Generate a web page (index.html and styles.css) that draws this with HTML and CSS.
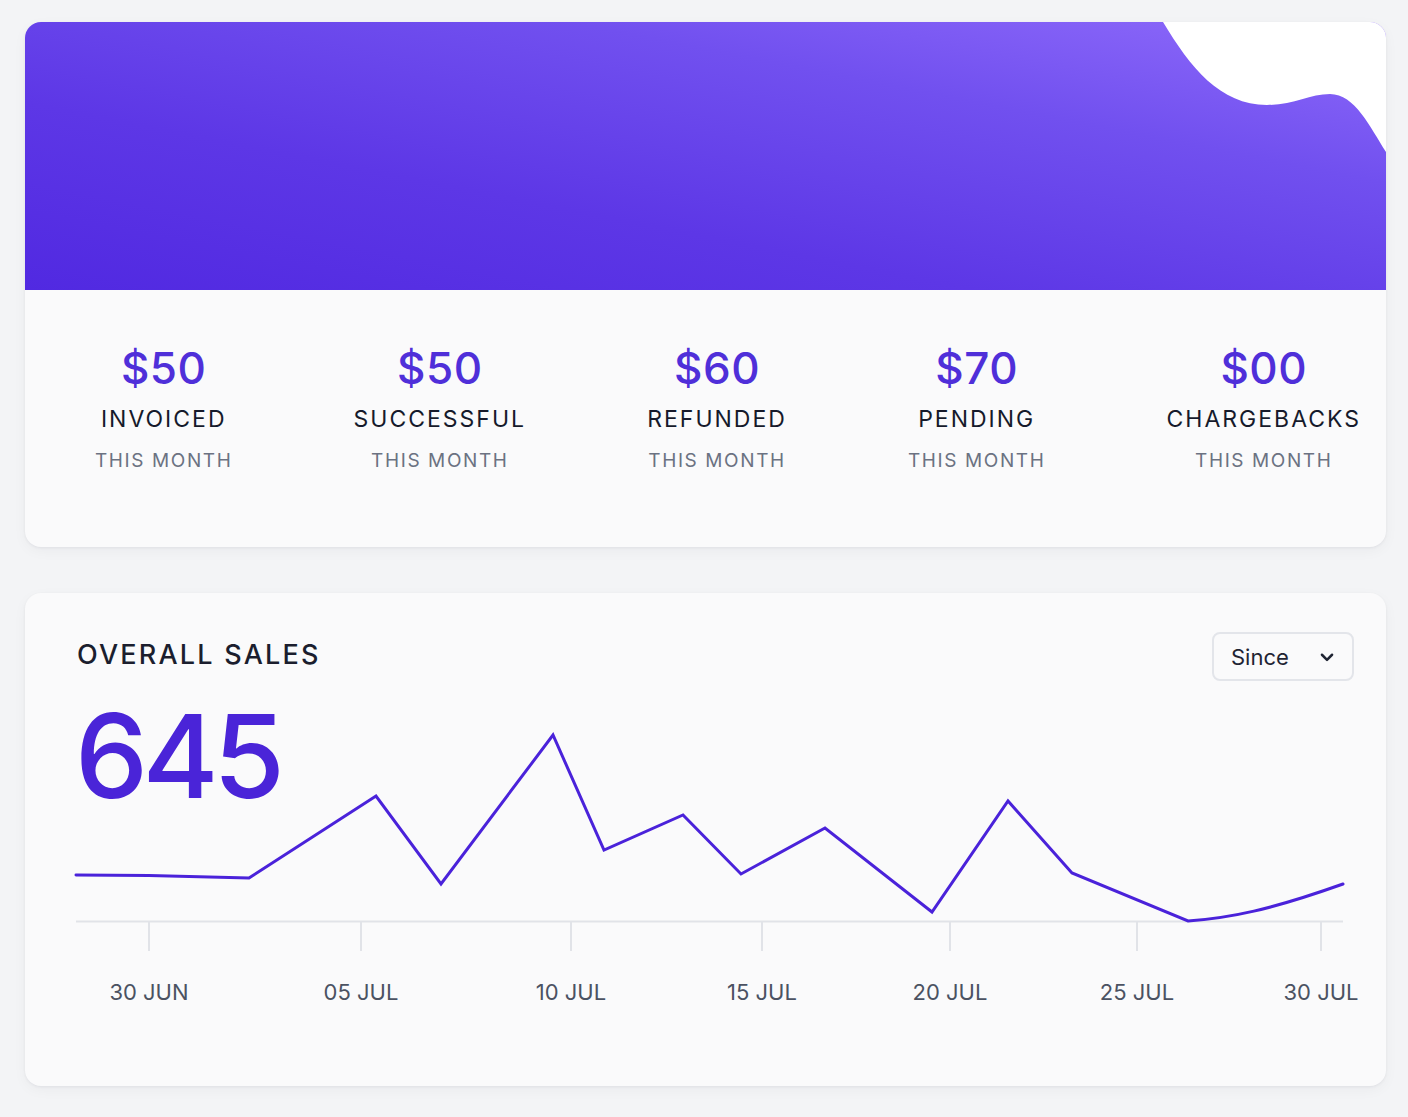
FILE: index.html
```html
<!DOCTYPE html>
<html lang="en">
<head>
<meta charset="utf-8">
<title>Dashboard</title>
<link rel="stylesheet" href="styles.css">
</head>
<body>
<main class="page">
  <section class="card summary">
    <div class="hero">
      <svg class="wave" viewBox="0 0 1361 268" preserveAspectRatio="none" aria-hidden="true">
        <path d="M1138,0 C1165,45 1195,83 1242,83 C1268,83 1285,72 1305,72 C1330,72 1345,105 1361,130 L1361,0 Z" fill="#ffffff"/>
      </svg>
    </div>
    <div class="stats">
      <div class="stat"><div class="value">$50</div><div class="label">INVOICED</div><div class="sub">THIS MONTH</div></div>
      <div class="stat"><div class="value">$50</div><div class="label">SUCCESSFUL</div><div class="sub">THIS MONTH</div></div>
      <div class="stat"><div class="value">$60</div><div class="label">REFUNDED</div><div class="sub">THIS MONTH</div></div>
      <div class="stat"><div class="value">$70</div><div class="label">PENDING</div><div class="sub">THIS MONTH</div></div>
      <div class="stat"><div class="value">$00</div><div class="label">CHARGEBACKS</div><div class="sub">THIS MONTH</div></div>
    </div>
  </section>

  <section class="card sales">
    <div class="sales-head">
      <h2 class="sales-title">OVERALL SALES</h2>
      <button class="select" type="button">
        <span>Since</span>
        <svg class="chev" viewBox="0 0 16 16" aria-hidden="true"><path d="M3.5 6 L8 10.5 L12.5 6" fill="none" stroke="#1f2433" stroke-width="2.2" stroke-linecap="round" stroke-linejoin="round"/></svg>
      </button>
    </div>
    <div class="sales-body">
      <div class="total">645</div>
      <svg class="chart" viewBox="0 0 1361 320" aria-hidden="false">
        <g transform="translate(-25,-700)">
          <line x1="76" y1="921.5" x2="1343" y2="921.5" stroke="#e1e3e8" stroke-width="2"/>
          <g stroke="#e1e3e8" stroke-width="2">
            <line x1="149" y1="922" x2="149" y2="951"/>
            <line x1="361" y1="922" x2="361" y2="951"/>
            <line x1="571" y1="922" x2="571" y2="951"/>
            <line x1="762" y1="922" x2="762" y2="951"/>
            <line x1="950" y1="922" x2="950" y2="951"/>
            <line x1="1137" y1="922" x2="1137" y2="951"/>
            <line x1="1321" y1="922" x2="1321" y2="951"/>
          </g>
          <path d="M76,875 L149,875.5 L249,878 L376,796 L441,884 L553,735 L604,850 L683,815 L741,874 L825,828 L932,912 L1008,801 L1072,873 L1188,921 C1230,918 1270,910 1343,884" fill="none" stroke="#4a22da" stroke-width="3" stroke-linejoin="miter" stroke-linecap="round"/>
          <g class="ticks" fill="#4b5262" text-anchor="middle">
            <text x="149" y="1000">30 JUN</text>
            <text x="361" y="1000">05 JUL</text>
            <text x="571" y="1000">10 JUL</text>
            <text x="762" y="1000">15 JUL</text>
            <text x="950" y="1000">20 JUL</text>
            <text x="1137" y="1000">25 JUL</text>
            <text x="1321" y="1000">30 JUL</text>
          </g>
        </g>
      </svg>
    </div>
  </section>
</main>
</body>
</html>
```

FILE: styles.css
```css
* { box-sizing: border-box; }

html, body {
  margin: 0;
  padding: 0;
  background: #f3f4f6;
  font-family: Inter, "Noto Sans", "Liberation Sans", sans-serif;
}

.page {
  padding: 22px 22px 31px 25px;
  display: flex;
  flex-direction: column;
  gap: 46px;
}

.card {
  background: #fafafb;
  border-radius: 16px;
  box-shadow: 0 1px 3px rgba(20, 24, 40, 0.06), 0 4px 14px rgba(20, 24, 40, 0.04);
  overflow: hidden;
}

.hero {
  height: 268px;
  background: linear-gradient(to top right, #5129e1 0%, #5d37e6 35%, #7150ef 70%, #8f6bfb 100%);
  position: relative;
}

.wave {
  position: absolute;
  inset: 0;
  width: 100%;
  height: 100%;
  display: block;
}

.stats {
  display: flex;
  justify-content: space-between;
  padding: 50px 25px 72px 70px;
}

.stat {
  display: flex;
  flex-direction: column;
  align-items: center;
  text-align: center;
}

.value {
  font-size: 44px;
  line-height: 56px;
  font-weight: 500;
  color: #4f2fd9;
  letter-spacing: 0.5px;
}

.label {
  font-size: 23px;
  line-height: 30px;
  font-weight: 400;
  color: #161a2b;
  letter-spacing: 2px;
  margin-top: 8px;
}

.sub {
  font-size: 19px;
  line-height: 28px;
  color: #6b7282;
  letter-spacing: 1.6px;
  margin-top: 13px;
}

.sales {
  padding: 39px 32px 0 0;
  height: 493px;
}

.sales-head {
  display: flex;
  align-items: center;
  justify-content: space-between;
  padding-left: 52px;
}

.sales-title {
  margin: 0;
  font-size: 27px;
  line-height: 32px;
  font-weight: 500;
  color: #1b1e2e;
  letter-spacing: 2.2px;
  margin-top: -4px;
}

.select {
  width: 142px;
  height: 49px;
  border: 2px solid #e3e5ea;
  border-radius: 8px;
  background: #fafafb;
  display: flex;
  align-items: center;
  justify-content: space-between;
  padding: 0 16px 0 17px;
  font-family: inherit;
  font-size: 22px;
  color: #1f2433;
}

.chev {
  width: 18px;
  height: 18px;
}

.sales-body {
  display: grid;
  margin-top: 19px;
  margin-right: -32px;
}

.sales-body > * {
  grid-area: 1 / 1;
}

.total {
  font-size: 116px;
  line-height: 1;
  font-weight: 500;
  color: #4a24d8;
  letter-spacing: -5.5px;
  padding-left: 50px;
  margin-top: -2px;
  align-self: start;
}

.chart {
  width: 1361px;
  height: 320px;
  display: block;
}

.ticks {
  font-family: Inter, "Noto Sans", "Liberation Sans", sans-serif;
  font-size: 22px;
}
```
